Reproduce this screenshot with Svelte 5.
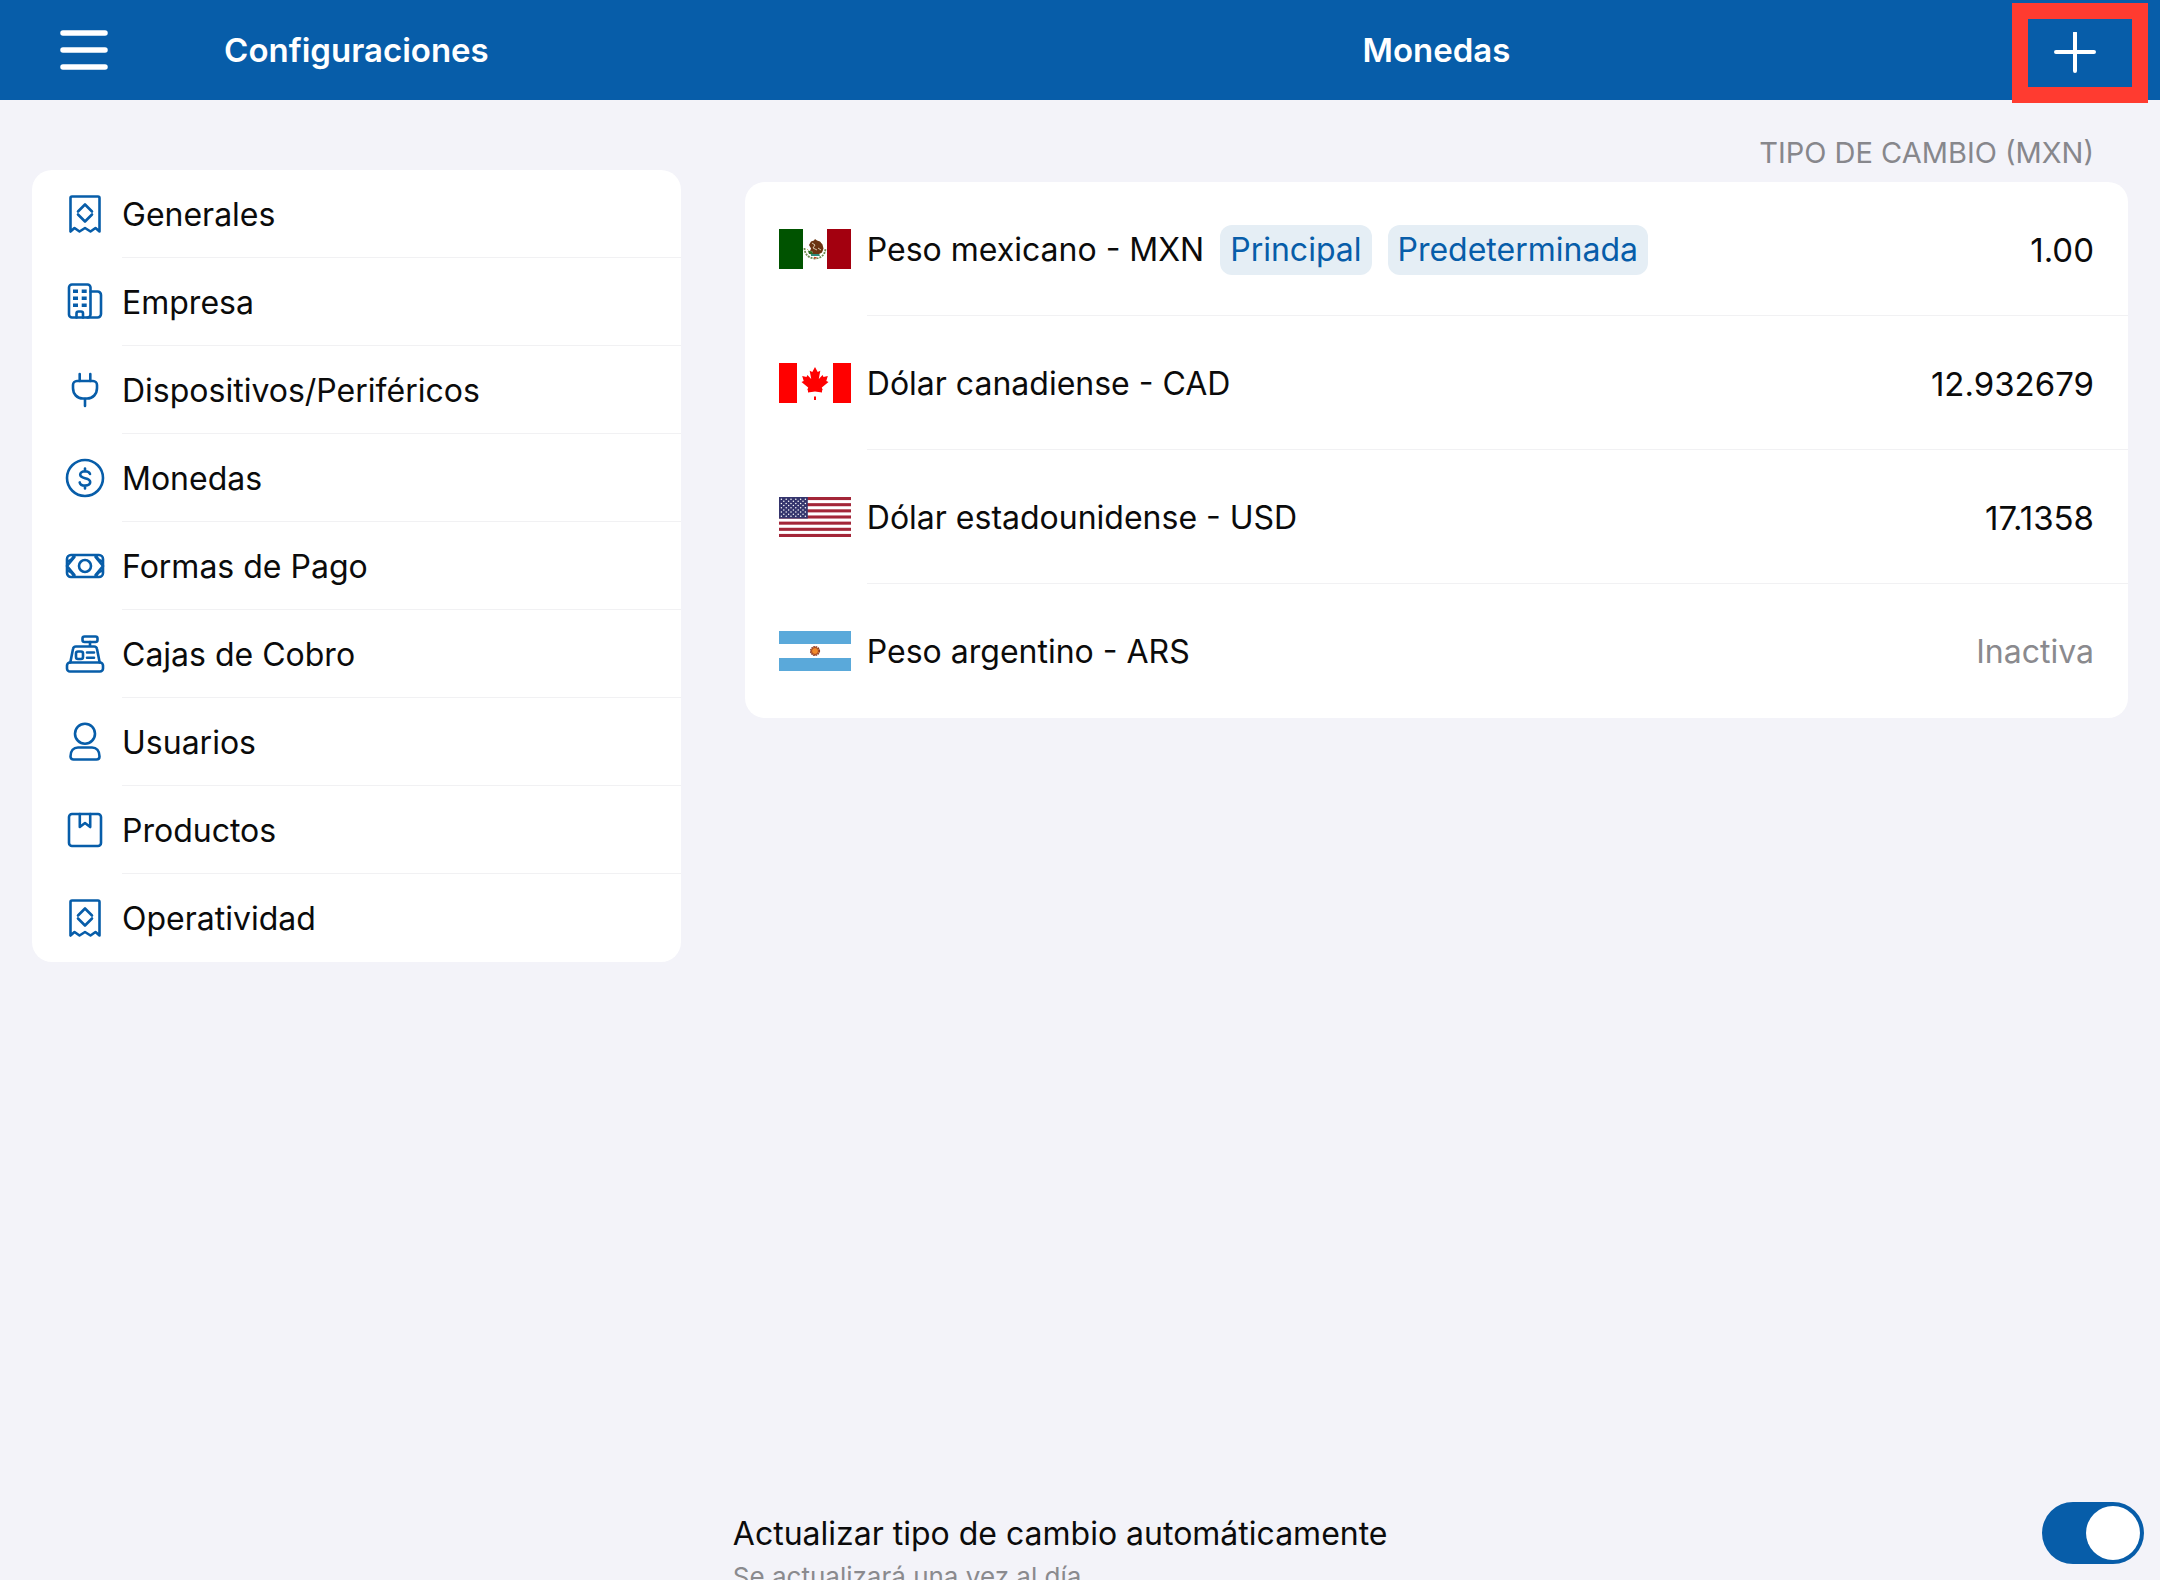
<script>
  let { handleAdd = () => {} } = $props()

  let autoUpdate = $state(true)

  const menu = [
    { icon: 'receipt', label: 'Generales' },
    { icon: 'building', label: 'Empresa' },
    { icon: 'plug', label: 'Dispositivos/Periféricos' },
    { icon: 'coin', label: 'Monedas' },
    { icon: 'bill', label: 'Formas de Pago' },
    { icon: 'register', label: 'Cajas de Cobro' },
    { icon: 'user', label: 'Usuarios' },
    { icon: 'box', label: 'Productos' },
    { icon: 'receipt', label: 'Operatividad' },
  ]

  const currencies = [
    { code: 'MXN', name: 'Peso mexicano', rate: '1.00', tags: ['Principal', 'Predeterminada'] },
    { code: 'CAD', name: 'Dólar canadiense', rate: '12.932679', tags: [] },
    { code: 'USD', name: 'Dólar estadounidense', rate: '17.1358', tags: [] },
    { code: 'ARS', name: 'Peso argentino', rate: null, tags: [] },
  ]

  // 50 stars: nine rows alternating six and five
  const stars = []
  for (let row = 0; row < 9; row++) {
    const count = row % 2 === 0 ? 6 : 5
    for (let col = 0; col < count; col++) {
      stars.push({ x: 2.4 + (row % 2) * 2.4 + col * 4.8, y: 2.15 + row * 2.15 })
    }
  }
</script>

<svelte:head>
  <title>Configuraciones - Monedas</title>
</svelte:head>

<div class="app">
  <header class="topbar">
    <div class="topbar-side">
      <button type="button" class="menu-button" aria-label="Menú">
        <svg width="48" height="42" viewBox="0 0 48 42" stroke="currentColor" stroke-width="5.5" stroke-linecap="round">
          <path d="M3 4h42M3 21h42M3 38h42" />
        </svg>
      </button>
      <h1>Configuraciones</h1>
    </div>
    <div class="topbar-main">
      <h2>Monedas</h2>
      <button type="button" class="add-button" aria-label="Agregar moneda" onclick={() => handleAdd()}>
        <svg width="42" height="42" viewBox="0 0 42 42" stroke="currentColor" stroke-width="4" stroke-linecap="round">
          <path d="M2 20h38M21 1v38" />
        </svg>
      </button>
    </div>
  </header>

  <div class="content">
    <nav class="sidebar">
      <ul class="card">
        {#each menu as item}
          <li>
            <a class="menu-item" href="#{item.label}">
              <svg class="icon" viewBox="0 0 40 40">
                {#if item.icon === 'receipt'}
                  <path d="M5.5 37.5V4a1.5 1.5 0 0 1 1.5-1.5h26a1.5 1.5 0 0 1 1.5 1.5v33.5l-4-3.5-5 3.5-5.5-3.5-5.5 3.5-5-3.5z" />
                  <path d="M13 17.5l7-7 7 7M13 20.5l7 7 7-7" />
                {:else if item.icon === 'building'}
                  <rect x="4" y="2.5" width="21.5" height="33" rx="3" />
                  <path d="M25.5 9.5h7a3.5 3.5 0 0 1 3.5 3.5v19a3.5 3.5 0 0 1-3.5 3.5h-10" />
                  <path class="solid" d="M8 7.5h5v3.5h-5zM16.7 7.5h5v3.5h-5zM8 14.5h5v3.5h-5zM16.7 14.5h5v3.5h-5zM8 21.5h5v3.5h-5zM16.7 21.5h5v3.5h-5z" />
                  <path d="M11.5 35.5v-4a2 2 0 0 1 2-2h2.5a2 2 0 0 1 2 2v4" />
                {:else if item.icon === 'plug'}
                  <path d="M14.7 4v7M25.3 4v7M20 29v7" />
                  <path d="M12 11h16a4 4 0 0 1 4 4v3c0 6-4 10.5-10 10.5h-4c-6 0-10-4.5-10-10.5v-3a4 4 0 0 1 4-4z" />
                {:else if item.icon === 'coin'}
                  <circle cx="20" cy="20" r="18" />
                  <path d="M20 10.5v3M20 27.5v3M25 16c-.5-1.700-2.400-2.700-5-2.700-2.900 0-4.800 1.300-4.800 3.300 0 2 1.600 2.900 4.800 3.700 3.500.8 5.200 1.700 5.200 3.800 0 2.200-2.100 3.500-5.200 3.500-2.900 0-4.900-1.200-5.300-3.200" />
                {:else if item.icon === 'bill'}
                  <rect x="2" y="9" width="36" height="22" rx="4" />
                  <circle cx="20" cy="20" r="6" />
                  <path d="M2 20l7.500-9M38 20l-7.500-9M2 20l7.500 9M38 20l-7.500 9" />
                  <path d="M2.500 15.500q4.500-1 6.500-6M37.500 15.500q-4.500-1-6.500-6M2.500 24.500q4.500 1 6.500 6M37.500 24.500q-4.500 1-6.500 6" />
                {:else if item.icon === 'register'}
                  <rect x="17.5" y="2.5" width="15" height="5.5" rx="2" />
                  <path d="M25 8v4.5M5.300 28.500l2.700-13.500a3 3 0 0 1 3-2.500h18a3 3 0 0 1 3 2.500l2.700 13.500" />
                  <rect x="2" y="28.5" width="36" height="9" rx="3" />
                  <rect x="11" y="17.5" width="7" height="7.5" rx="2" />
                  <path d="M22 18.5h7M22 23.7h7" />
                {:else if item.icon === 'user'}
                  <circle cx="20" cy="11.7" r="10" />
                  <path d="M13 25.5h14c4.500 0 7.500 3.500 7.500 9 0 2-1.300 3-3 3h-23c-1.700 0-3-1-3-3 0-5.500 3-9 7.500-9z" />
                {:else}
                  <rect x="4" y="4" width="32" height="32" rx="3" />
                  <path d="M14.8 4v13l5.200-4 5.200 4v-13" />
                {/if}
              </svg>
              <span class="menu-label">{item.label}</span>
            </a>
          </li>
        {/each}
      </ul>
    </nav>

    <main class="main">
      <p class="column-title">Tipo de cambio (MXN)</p>
      <ul class="card">
        {#each currencies as currency}
          <li class="currency">
            <svg class="flag" viewBox="0 0 72 40">
              {#if currency.code === 'MXN'}
                <path fill="#005300" d="M0 0h24v40h-24z" />
                <path fill="#fff" d="M24 0h24v40h-24z" />
                <path fill="#a3000f" d="M48 0h24v40h-24z" />
                <path fill="none" stroke="#6f8a50" stroke-width="1.8" stroke-dasharray="2 1" d="M25.500 19c0 14 21 14 21 0" />
                <path fill="none" stroke="#c9b26a" stroke-width="1" stroke-dasharray="1 1.5" d="M28.500 20c1 9 14 9 15 0" />
                <path fill="#6b3412" d="M30 16l2-3.500 3-1 1-1.500 2 1.500 3 1 2.500 3 1 4-1.500 4-3 1.500-4 1-5-1 3-2-3-1 1-2.500z" />
                <path fill="none" stroke="#f4ead0" stroke-width=".8" d="M33 14l3 2-2 3 4 2M39 19l3 2" />
                <path fill="#2f8a7c" d="M32 25h8l1 2h-9z" />
                <path fill="#2c6b20" d="M29 21.500l4 1 1 2.500h-4z" />
                <path fill="#c8432a" d="M35 28h2.500v1.500h-2.500z" />
              {:else if currency.code === 'CAD'}
                <path fill="#fff" d="M0 0h72v40h-72z" />
                <path fill="#f00" d="M0 0h18v40h-18zM54 0h18v40h-18z" />
                <path fill="#f00" d="M36 4l-2.700 5-2.600-1.300 1.500 8.200-3.800-4-.9 2.100-4.300-.9 1.500 4.800-2.200 1.200 6.700 5.500-1 2.600 6.800-1h2l6.800 1-1-2.600 6.700-5.500-2.200-1.200 1.500-4.800-4.300.9-.9-2.100-3.800 4 1.500-8.200-2.600 1.300z" />
                <path fill="#f00" d="M29 26h14v3.500l-7-1-7 1zM35 33.500h2v3.500h-2z" />
              {:else if currency.code === 'USD'}
                <path fill="#fff" d="M0 0h72v40h-72z" />
                {#each Array(7) as _, i}
                  <rect fill="#a32638" x="0" y={i * 6.154} width="72" height="3.077" />
                {/each}
                <path fill="#35356d" d="M0 0h28.800v21.540h-28.800z" />
                {#each stars as star}
                  <circle fill="#fff" cx={star.x} cy={star.y} r=".75" />
                {/each}
              {:else}
                <path fill="#fff" d="M0 0h72v40h-72z" />
                <path fill="#5aa9da" d="M0 0h72v13h-72zM0 27h72v13h-72z" />
                <circle cx="36" cy="20" r="4.2" fill="none" stroke="#8c3b22" stroke-width="1.8" stroke-dasharray="1.6 .6" />
                <circle cx="36" cy="20" r="3.5" fill="#f08a2c" stroke="#a6451f" />
              {/if}
            </svg>
            <div class="currency-body">
              <span class="currency-name">{currency.name} - {currency.code}</span>
              {#each currency.tags as tag}
                <span class="tag">{tag}</span>
              {/each}
              {#if currency.rate}
                <span class="rate">{currency.rate}</span>
              {:else}
                <span class="inactive">Inactiva</span>
              {/if}
            </div>
          </li>
        {/each}
      </ul>

      <footer class="auto-update">
        <div>
          <label for="auto-update">Actualizar tipo de cambio automáticamente</label>
          <p>Se actualizará una vez al día</p>
        </div>
        <input id="auto-update" class="switch" type="checkbox" role="switch" bind:checked={autoUpdate} />
      </footer>
    </main>
  </div>
</div>

<style>
  :global(body) {
    background: #f3f3f9;
  }

  .app {
    --primary: #075da9;
    --side-width: 33%;
    display: flex;
    flex-direction: column;
    height: 100vh;
    overflow: hidden;
    background: #f3f3f9;
    color: #0b0b0b;
    font-family: Inter, 'Liberation Sans', sans-serif;
    font-size: 32px;
    line-height: 40px;
  }

  h1,
  h2,
  p,
  ul {
    margin: 0;
    padding: 0;
  }

  ul {
    list-style: none;
  }

  button {
    display: flex;
    align-items: center;
    justify-content: center;
    box-sizing: border-box;
    padding: 0;
    border: none;
    background: none;
    color: white;
    cursor: pointer;
  }

  .topbar {
    display: flex;
    flex-shrink: 0;
    height: 100px;
    background: var(--primary);
    color: white;
  }

  .topbar-side,
  .topbar-main {
    display: grid;
    grid-template-columns: 168px 1fr 168px;
    grid-template-rows: 100px;
    align-items: center;
  }

  .topbar-side {
    width: var(--side-width);
  }

  .topbar-main {
    flex: 1;
  }

  h1,
  h2 {
    grid-column: 2;
    font-size: 33px;
    font-weight: 600;
    text-align: center;
  }

  .menu-button {
    width: 168px;
    height: 100px;
  }

  .add-button {
    position: relative;
    width: 136px;
    height: 100px;
    margin: 6px 0 0 20px;
    padding-right: 10px;
    border: 16px solid #ff3b30;
  }

  .content {
    display: flex;
    flex: 1;
    min-height: 0;
  }

  .sidebar {
    box-sizing: border-box;
    width: var(--side-width);
    padding: 70px 32px 32px;
  }

  .card {
    background: white;
    border-radius: 20px;
    overflow: hidden;
  }

  .menu-item {
    display: flex;
    align-items: center;
    gap: 17px;
    padding-left: 33px;
    color: inherit;
    text-decoration: none;
  }

  .icon {
    flex-shrink: 0;
    width: 40px;
    height: 40px;
    fill: none;
    stroke: var(--primary);
    stroke-width: 2.6;
    stroke-linecap: round;
    stroke-linejoin: round;
  }

  .icon .solid {
    fill: var(--primary);
    stroke: none;
  }

  .menu-label {
    flex: 1;
    box-sizing: border-box;
    height: 88px;
    line-height: 90px;
    border-bottom: 1px solid #f1f1f3;
  }

  .main {
    display: flex;
    flex: 1;
    flex-direction: column;
    padding: 33px 32px 0;
  }

  .column-title {
    padding: 0 34px 9px 0;
    color: #87878c;
    font-size: 29px;
    text-align: right;
    text-transform: uppercase;
  }

  .currency {
    display: flex;
    align-items: center;
    gap: 16px;
    padding-left: 34px;
  }

  .flag {
    flex-shrink: 0;
    width: 72px;
    height: 40px;
  }

  .currency-body {
    display: flex;
    flex: 1;
    align-items: center;
    gap: 16px;
    box-sizing: border-box;
    height: 134px;
    padding: 2px 34px 0 0;
    border-bottom: 1px solid #f1f1f3;
  }

  li:last-child .menu-label,
  li:last-child .currency-body {
    border-bottom-color: transparent;
  }

  .tag {
    padding: 5px 10px;
    border-radius: 12px;
    background: #e5eef5;
    color: var(--primary);
  }

  .rate,
  .inactive {
    margin-left: auto;
  }

  .rate {
    font-size: 33px;
  }

  .inactive {
    color: #8a8a8e;
  }

  .auto-update {
    display: flex;
    align-items: flex-start;
    justify-content: space-between;
    height: 80px;
    margin: auto -16px 0 -12px;
  }

  .auto-update label {
    display: block;
    margin-top: 14px;
  }

  .auto-update p {
    margin-top: 7px;
    color: #8a8a8e;
    font-size: 26px;
    line-height: 32px;
  }

  .switch {
    appearance: none;
    flex-shrink: 0;
    width: 102px;
    height: 62px;
    margin: 2px 0 0;
    padding: 4px;
    border-radius: 31px;
    background: #d5d5da;
    cursor: pointer;
  }

  .switch::before {
    content: '';
    display: block;
    width: 54px;
    height: 54px;
    border-radius: 50%;
    background: white;
  }

  .switch:checked {
    background: var(--primary);
  }

  .switch:checked::before {
    margin-left: auto;
  }
</style>
